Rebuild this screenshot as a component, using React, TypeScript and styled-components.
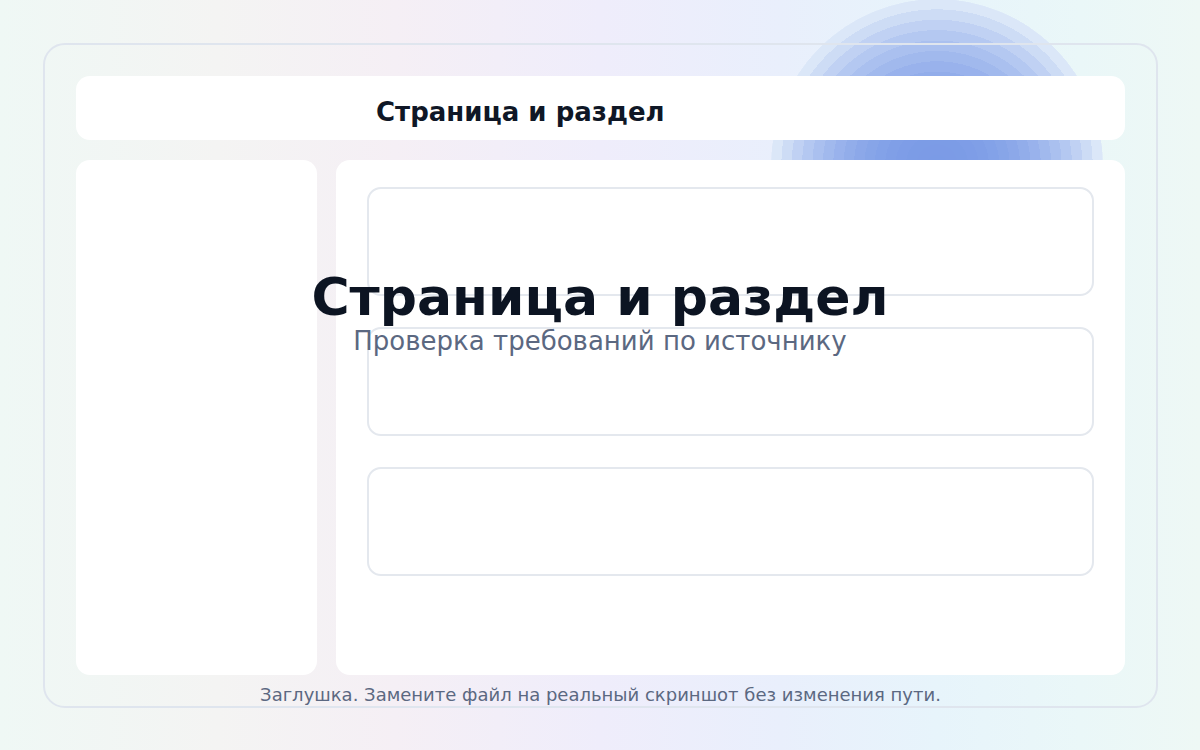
import styled, { createGlobalStyle } from 'styled-components';

const GlobalStyle = createGlobalStyle`
  html, body {
    margin: 0;
    padding: 0;
  }
  body {
    font-family: 'DejaVu Sans', 'Noto Sans', sans-serif;
  }
`;

// stepped rings for the blue glow, light at the rim, deeper in the middle
const glowCenter = [123, 155, 230];
const glowEdge = [219, 231, 248];
const ringCount = 16;

function ringGradient() {
  const stops: string[] = [];
  for (let i = 0; i < ringCount; i++) {
    const t0 = i / ringCount;
    const t1 = (i + 1) / ringCount;
    const f = Math.pow(t1, 2.5);
    const c = glowCenter.map((v, k) => Math.round(v + (glowEdge[k] - v) * f));
    const col = `rgb(${c[0]}, ${c[1]}, ${c[2]})`;
    stops.push(`${col} ${(t0 * 100).toFixed(2)}%`, `${col} ${(t1 * 100).toFixed(2)}%`);
  }
  return `radial-gradient(circle closest-side, ${stops.join(', ')}, transparent 100%)`;
}

export default function App() {
  return (
    <>
      <GlobalStyle />
      <Page>
        <Glow style={{ background: ringGradient() }} />
        <Frame>
          <Header>
            <HeaderTitle>Страница и раздел</HeaderTitle>
          </Header>
          <Body>
            <Sidebar />
            <Main>
              <Card />
              <Card />
              <Card />
            </Main>
          </Body>
          <Footer>Заглушка. Замените файл на реальный скриншот без изменения пути.</Footer>
        </Frame>
        <Overlay>
          <BigTitle>Страница и раздел</BigTitle>
          <Subtitle>Проверка требований по источнику</Subtitle>
        </Overlay>
      </Page>
    </>
  );
}

const Page = styled.div`
  position: relative;
  width: 1200px;
  height: 750px;
  box-sizing: border-box;
  padding: 43px 42px 43px 43px;
  overflow: hidden;
  background: linear-gradient(
    90deg,
    #eff8f5 0%,
    #f4f4f3 18%,
    #f5eff5 33%,
    #efedfb 50%,
    #e9effc 65%,
    #e7f4fb 78%,
    #eaf7f8 90%,
    #eef8f5 100%
  );
`;

const Glow = styled.div`
  position: absolute;
  left: 771px;
  top: -1px;
  width: 332px;
  height: 332px;
  border-radius: 50%;
`;

const Frame = styled.div`
  position: relative;
  z-index: 1;
  height: 665px;
  box-sizing: border-box;
  border: 2px solid #dfe5ee;
  border-radius: 22px;
  padding: 31px 31px 0;
  display: flex;
  flex-direction: column;
`;

const Header = styled.div`
  height: 64px;
  flex: none;
  box-sizing: border-box;
  background: #ffffff;
  border-radius: 14px;
  display: flex;
  align-items: center;
  padding: 7px 0 0 300px;
`;

const HeaderTitle = styled.div`
  font-size: 26px;
  font-weight: 700;
  color: #0f1726;
`;

const Body = styled.div`
  margin-top: 20px;
  height: 515px;
  flex: none;
  display: grid;
  grid-template-columns: 241px 1fr;
  gap: 19px;
`;

const Sidebar = styled.div`
  background: #ffffff;
  border-radius: 14px;
`;

const Main = styled.div`
  background: #ffffff;
  border-radius: 14px;
  padding: 27px 31px;
  display: flex;
  flex-direction: column;
  gap: 31px;
`;

const Card = styled.div`
  height: 109px;
  box-sizing: border-box;
  border: 2px solid #e4e8ee;
  border-radius: 14px;
`;

const Footer = styled.div`
  flex: 1;
  display: flex;
  align-items: center;
  justify-content: center;
  padding-top: 8px;
  font-size: 18px;
  color: #5b6881;
`;

const Overlay = styled.div`
  position: absolute;
  z-index: 2;
  left: 0;
  right: 0;
  top: 262px;
  display: flex;
  flex-direction: column;
  align-items: center;
  pointer-events: none;
`;

const BigTitle = styled.div`
  font-size: 52px;
  font-weight: 700;
  line-height: 70px;
  color: #0c1422;
`;

const Subtitle = styled.div`
  font-size: 26px;
  line-height: 30px;
  margin-top: -6px;
  color: #5b6881;
`;
